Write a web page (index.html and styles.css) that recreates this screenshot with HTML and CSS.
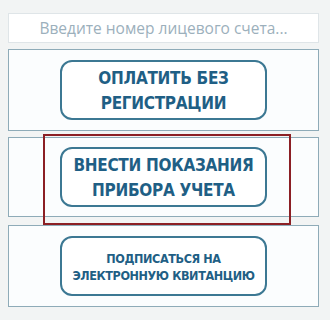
FILE: index.html
```html
<!DOCTYPE html>
<html lang="ru">
<head>
<meta charset="utf-8">
<link rel="stylesheet" href="styles.css">
</head>
<body>
<div class="page">
  <div class="search">Введите номер лицевого счета...</div>
  <div class="panel"><a class="btn">ОПЛАТИТЬ БЕЗ<br>РЕГИСТРАЦИИ</a></div>
  <div class="panel p2"><a class="btn">ВНЕСТИ ПОКАЗАНИЯ<br>ПРИБОРА УЧЕТА</a></div>
  <div class="panel p3"><a class="btn small">ПОДПИСАТЬСЯ НА<br>ЭЛЕКТРОННУЮ КВИТАНЦИЮ</a></div>
  <div class="highlight"></div>
</div>
</body>
</html>
```
FILE: styles.css
```css
html, body { margin: 0; padding: 0; }
body { background: #f2f4f4; width: 330px; height: 320px; overflow: hidden; }
.page {
  position: relative;
  padding: 13px 11px 0 8px;
  display: flex;
  flex-direction: column;
  gap: 6px;
}
.search {
  height: 28px;
  background: #ffffff;
  border: 1px solid #dfe5e8;
  color: #9cb0bc;
  font-family: "Open Sans", sans-serif;
  font-size: 15.5px;
  line-height: 29px;
  text-align: center;
}
.panel {
  height: 80px;
  background: #fbfdfe;
  border: 1px solid #8eabb8;
  display: flex;
  align-items: center;
  justify-content: center;
}
.p2 { height: 78px; }
.p3 { margin-top: 2px; }
.btn {
  box-sizing: border-box;
  width: 207px;
  height: 60px;
  border: 2px solid #3c7893;
  border-radius: 12px;
  background: #ffffff;
  color: #1f5f85;
  font-family: "DejaVu Sans Condensed", "DejaVu Sans", sans-serif;
  font-weight: bold;
  font-size: 17px;
  letter-spacing: -0.3px;
  line-height: 25px;
  text-align: center;
  display: flex;
  align-items: center;
  justify-content: center;
  padding-top: 1px;
}
.btn.small { font-size: 12.5px; letter-spacing: -0.4px; line-height: 17px; white-space: nowrap; }
.highlight {
  position: absolute;
  left: 43px;
  top: 134px;
  width: 244px;
  height: 87px;
  border: 2px solid #8b1f24;
}
```
